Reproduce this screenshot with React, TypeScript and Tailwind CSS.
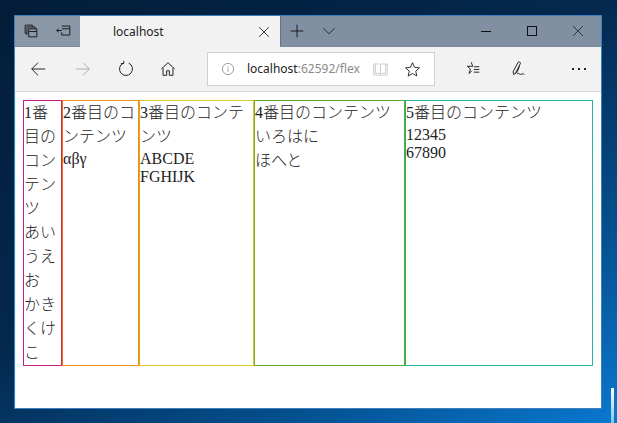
import type { ReactNode } from "react"

const cjk = { fontFamily: '"Liberation Serif", "Noto Sans CJK JP", serif' }

function Icon({ children, size = 20 }: { children: ReactNode; size?: number }) {
  return (
    <svg width={size} height={size} viewBox="0 0 20 20" fill="none" stroke="currentColor" strokeWidth="1">
      {children}
    </svg>
  )
}

function Btn({ className, children }: { className: string; children: ReactNode }) {
  return <div className={`flex items-center justify-center h-full shrink-0 ${className}`}>{children}</div>
}

function TitleBar() {
  return (
    <div className="flex h-[31px] bg-[#808fa2] text-[#111] border-b border-[#7d8b9c]">
      <div className="flex w-[65px] bg-[#8a97a6]">
        <Btn className="w-[32px]">
          <Icon size={18}>
            <path d="M3.5 3.5h8v2M3.5 3.5v9h2M5.5 5.5h9v2M5.5 5.5v9M7.5 7.5h9v9h-9zM7.5 10.5h9" />
          </Icon>
        </Btn>
        <Btn className="w-[33px]">
          <Icon size={18}>
            <path d="M7.5 4.5h9v10h-9v-3M16.5 7.5h-9M7.5 9.5H2M4 7.5l-2 2 2 2" />
          </Icon>
        </Btn>
      </div>
      <div className="flex w-[200px] items-center justify-between bg-[#f2f2f2] pl-[33px] pr-[8px] -mb-px">
        <span className="text-[12px] text-[#222]" style={{ fontFamily: '"Noto Sans", sans-serif' }}>localhost</span>
        <Icon size={16}>
          <path d="M4 4l12 12M16 4L4 16" />
        </Icon>
      </div>
      <div className="w-px bg-[#66727f]" />
      <Btn className="w-[32px]">
        <Icon size={18}>
          <path d="M10 3v14M3 10h14" />
        </Icon>
      </Btn>
      <Btn className="w-[32px]">
        <Icon size={16}>
          <path d="M3 6.5l7 7 7-7" />
        </Icon>
      </Btn>
      <div className="flex-1" />
      <Btn className="w-[46px]">
        <div className="w-[10px] h-px bg-[#111]" />
      </Btn>
      <Btn className="w-[46px]">
        <div className="w-[10px] h-[10px] border border-[#111]" />
      </Btn>
      <Btn className="w-[46px]">
        <Icon size={14}>
          <path d="M3 3l14 14M17 3L3 17" />
        </Icon>
      </Btn>
    </div>
  )
}

function ToolBar() {
  return (
    <div className="flex items-center h-[45px] bg-[#f2f2f2] border-b border-[#d2d2d2] text-[#111]">
      <Btn className="w-[46px]">
        <Icon size={18}>
          <path d="M18 10H3M10 3l-7 7 7 7" />
        </Icon>
      </Btn>
      <Btn className="w-[44px] text-[#a8a8a8]">
        <Icon size={18}>
          <path d="M2 10h15M10 3l7 7-7 7" />
        </Icon>
      </Btn>
      <Btn className="w-[41px]">
        <Icon size={18}>
          <path d="M7 3.4a7.2 7.2 0 1 0 6 0M7.5 1v3h-3.2" />
        </Icon>
      </Btn>
      <Btn className="w-[44px]">
        <Icon size={18}>
          <path d="M2.5 10L10 3l7.5 7M4.5 9v8h4v-5h3v5h4V9" />
        </Icon>
      </Btn>
      <div className="w-[17px]" />
      <div className="flex items-center h-[34px] w-[228px] bg-white border border-[#d0d0d0] pl-[13px]">
        <Icon size={14}>
          <circle cx="10" cy="10" r="8" stroke="#777" />
          <path d="M10 9v5M10 6v1.5" stroke="#777" />
        </Icon>
        <span className="ml-[12px] text-[12px] text-[#222]" style={{ fontFamily: '"Noto Sans", sans-serif' }}>
          localhost<span className="text-[#8a8a8a]">:62592/flex</span>
        </span>
        <div className="ml-[12px] text-[#c4c4c4]">
          <Icon size={17}>
            <path d="M2 3.5h7l1 1 1-1h7v13h-7l-1 1-1-1H2zM10 4.5v12M4 3.5v11h5M16 3.5v11h-5" />
          </Icon>
        </div>
        <div className="ml-[15px]">
          <Icon size={17}>
            <path d="M10 2l2.4 5.4 5.8.6-4.4 3.9 1.3 5.8L10 14.7l-5.1 3 1.3-5.8L1.8 8l5.8-.6z" />
          </Icon>
        </div>
      </div>
      <div className="w-[23px]" />
      <Btn className="w-[30px]">
        <Icon size={18}>
          <path d="M8 2.5l1.7 4.5h-6l3.4 3-1.4 5 3-3M11 7.5h6M11 10.5h6M11 13.5h6" />
        </Icon>
      </Btn>
      <Btn className="w-[44px] ml-[9px]">
        <Icon size={18}>
          <path d="M4 16l-.5-3L9 2.5c1-1 3 0 2.5 1.5L6 15zM6 15c1.5 0 3-4 4.5-8M8 15c2-1 2.5 1.5 4 1s2-1 4 0" />
        </Icon>
      </Btn>
      <div className="flex-1" />
      <div className="flex gap-[4px] pr-[15px]">
        <div className="w-[2px] h-[2px] bg-[#222]" />
        <div className="w-[2px] h-[2px] bg-[#222]" />
        <div className="w-[2px] h-[2px] bg-[#222]" />
      </div>
    </div>
  )
}

function Box({ className, title, children }: { className: string; title: string; children: ReactNode }) {
  return (
    <div className={`border ${className}`}>
      <div className="leading-[24px]">{title}</div>
      {children}
    </div>
  )
}

export default function App() {
  return (
    <div className="relative w-[617px] h-[423px] overflow-hidden pt-[15px] pl-[14px] bg-[linear-gradient(150deg,#031d38_0%,#04284e_45%,#04508f_75%,#0a78d0_100%)]">
      <div className="w-[588px] h-[394px] flex flex-col bg-white border border-[#3f7fbd]">
        <TitleBar />
        <ToolBar />
        <div className="flex-1 bg-white border-l border-[#dcfaff] pl-[7px] pt-[8px] text-[16px] text-[#222] font-light" style={cjk}>
          <div className="flex w-[570px] leading-[18px]">
            <Box className="w-[39px] border-[#c8208a] border-r-[#d8224e]" title="1番目のコンテンツ">
              <div className="leading-[24px]">あいうえお</div>
              <div className="leading-[24px]">かきくけこ</div>
            </Box>
            <Box className="w-[77px] border-[#e8921a] border-l-[#e8701a]" title="2番目のコンテンツ">
              <div className="pt-px">αβγ</div>
            </Box>
            <Box className="w-[115px] border-[#dcc828] border-l-[#e8a01a]" title="3番目のコンテンツ">
              <div className="pt-px">ABCDE</div>
              <div>FGHIJK</div>
            </Box>
            <Box className="w-[151px] border-[#62aa36] border-l-[#7aa82a]" title="4番目のコンテンツ">
              <div className="leading-[24px]">いろはに</div>
              <div className="leading-[24px]">ほへと</div>
            </Box>
            <Box className="w-[188px] border-[#22b8a2] border-l-[#28b060]" title="5番目のコンテンツ">
              <div className="pt-px">12345</div>
              <div>67890</div>
            </Box>
          </div>
        </div>
      </div>
      <div className="absolute left-[611px] top-[388px] w-[3px] h-[35px] bg-gradient-to-b from-white to-[#7cc4f0]" />
    </div>
  )
}
